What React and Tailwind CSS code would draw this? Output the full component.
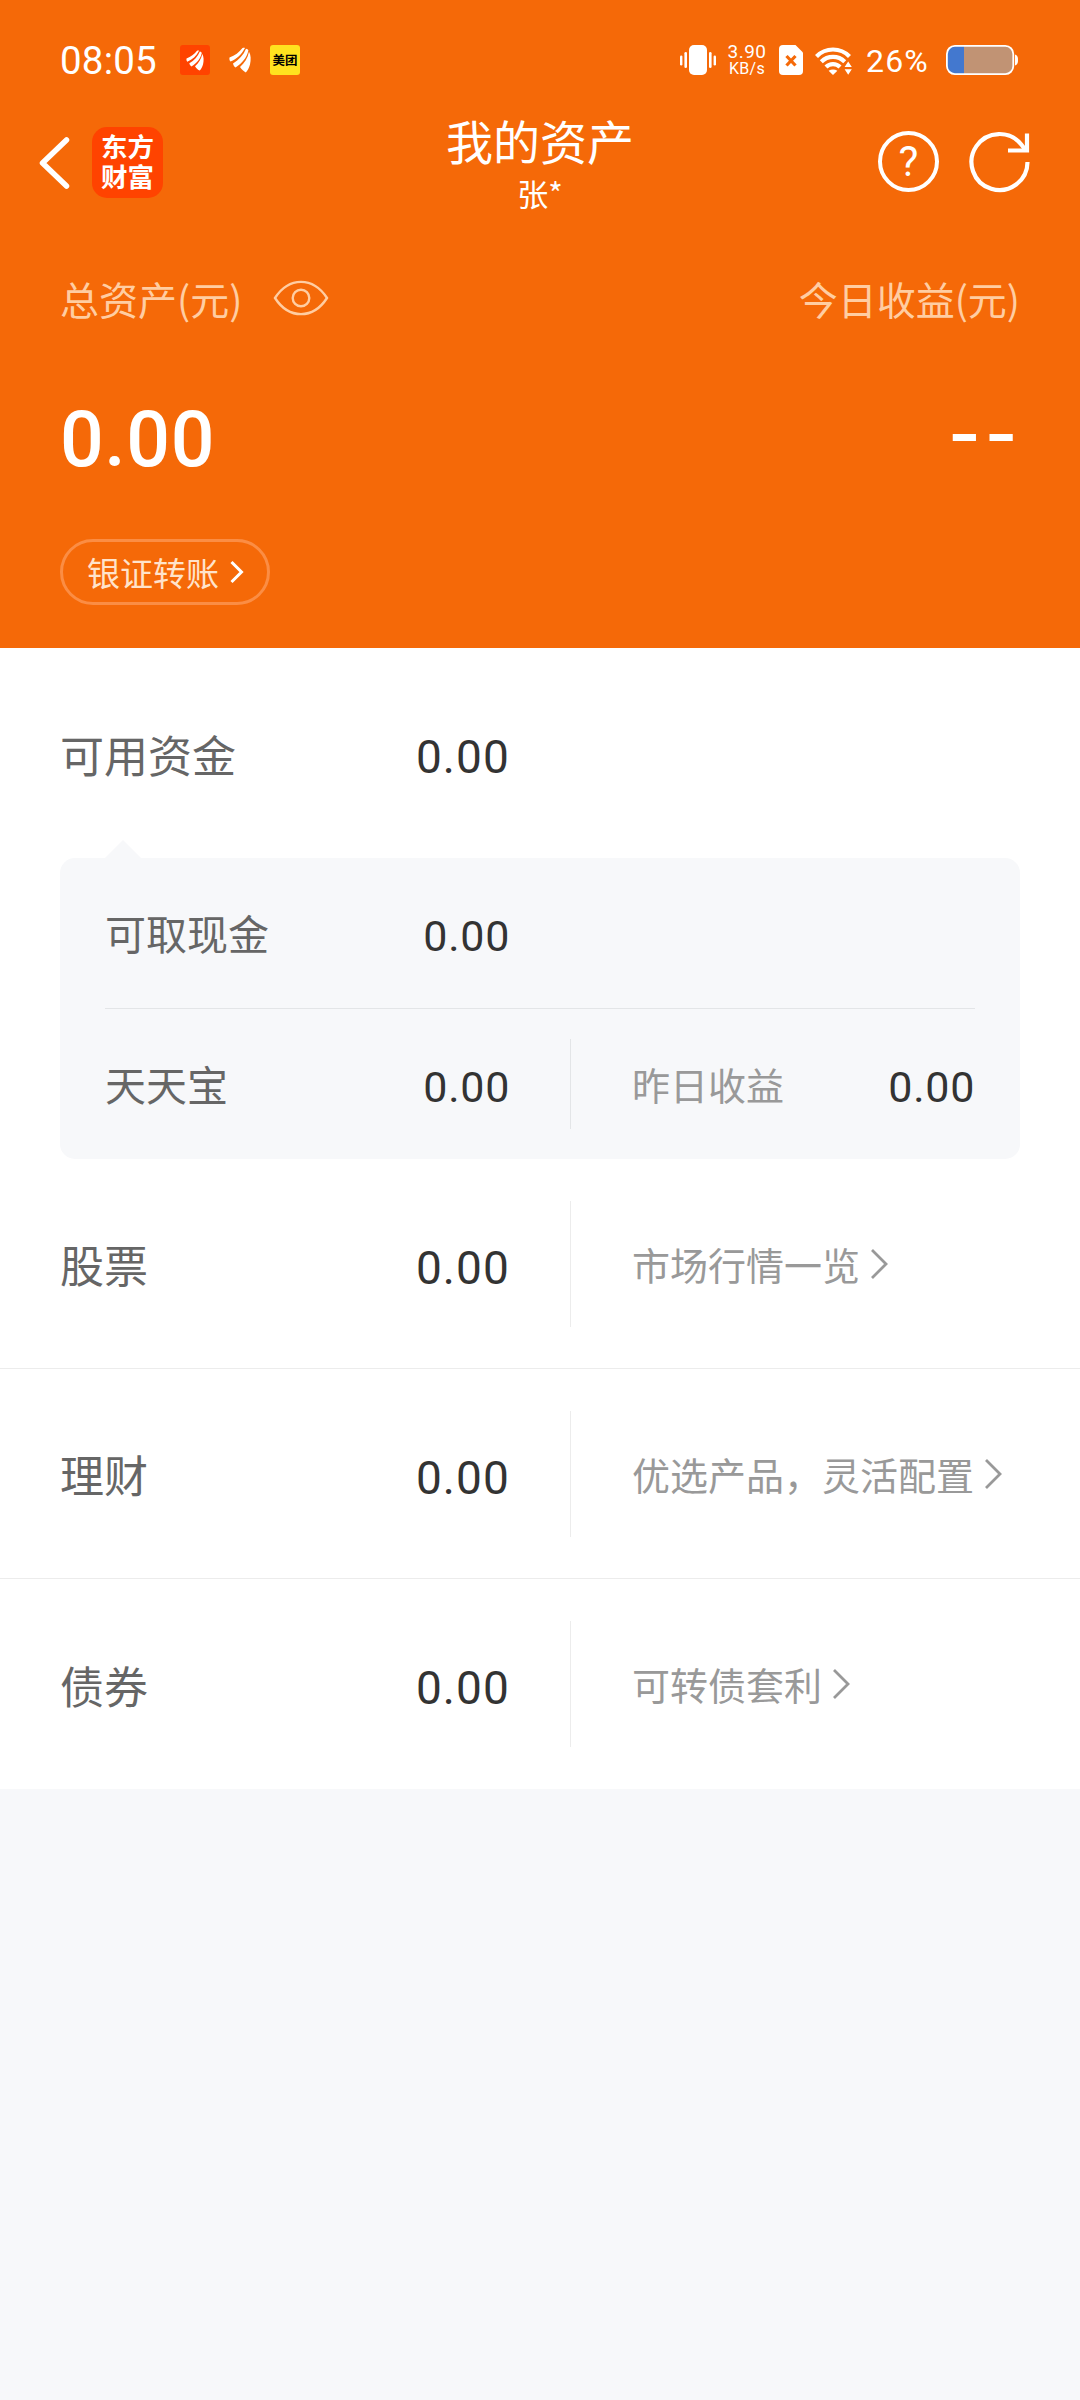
import React from 'react'

const CJK = "font-['Noto_Sans_CJK_SC',sans-serif]"
const NUM = "font-['Roboto','Noto_Sans_CJK_SC',sans-serif]"

const rows = [
  { name: '股票', amount: '0.00', link: '市场行情一览' },
  { name: '理财', amount: '0.00', link: '优选产品，灵活配置' },
  { name: '债券', amount: '0.00', link: '可转债套利' },
]

const Feather = ({ className }) => (
  <svg viewBox="0 0 22 26" className={className} fill="currentColor">
    <path d="M0.5 10.5C6 8.5 10 5.5 13.5 1C14.5 0.5 15.5 0.6 16 1C12.5 7.5 8 12 1.5 14.5C0.5 13.5 0.2 12 0.5 10.5Z" />
    <path d="M4 16.5C10 13 14.5 8 17 1.8C18.2 1.9 19 2.6 19.4 3.6C17.6 11 13.5 16 6.5 20.5C5.2 19.5 4.2 18 4 16.5Z" />
    <path d="M11 20C15.5 16 18.8 11 20 4.8C22 8 22 13 21 17.5C20 21 18.5 24 16.8 25.5C15 24.5 12.5 22.5 11 20Z" />
  </svg>
)

const StatusBar = () => (
  <div className={`flex h-[120px] items-center pl-[60px] pr-[61px] ${NUM}`}>
    <div className="w-[120px] pt-[1px] text-[38.5px] leading-[44px] tracking-[0.2px]">08:05</div>
    <div className="flex size-[30px] items-center justify-center rounded-[3px] bg-[#ff4300]">
      <Feather className="h-[21px] w-[18px]" />
    </div>
    <Feather className="ml-[19px] h-[26px] w-[22px]" />
    <div className={`ml-[19px] flex size-[30px] items-center justify-center rounded-[3px] bg-[#ffe21f] text-[12.5px] font-bold leading-none text-black ${CJK}`}>
      美团
    </div>

    <svg viewBox="0 0 36 30" className="ml-auto h-[30px] w-[36px]" fill="currentColor">
      <rect x="9" y="0" width="18" height="30" rx="5" />
      <rect x="0" y="10.5" width="2.4" height="10" rx="1.2" />
      <rect x="4.4" y="7" width="2.6" height="16" rx="1.3" />
      <rect x="29" y="7" width="2.6" height="16" rx="1.3" />
      <rect x="33.6" y="10.5" width="2.4" height="10" rx="1.2" />
    </svg>
    <div className="ml-[10px] flex w-[42px] flex-col items-center">
      <span className="text-[19px] leading-[16px] tracking-[0.5px]">3.90</span>
      <span className="text-[16px] leading-[17px] tracking-[0.3px]">KB/s</span>
    </div>
    <svg viewBox="0 0 24 30" className="ml-[11px] h-[30px] w-[24px]">
      <path d="M4 0H16.5L24 7.5V26A4 4 0 0 1 20 30H4A4 4 0 0 1 0 26V4A4 4 0 0 1 4 0Z" fill="white" />
      <path d="M7.5 11L16.5 20.5M16.5 11L7.5 20.5" stroke="#f56908" strokeWidth="3.2" />
    </svg>
    <svg viewBox="0 0 38 30" className="ml-[12px] h-[30px] w-[38px]" fill="none" stroke="white" strokeWidth="4.2">
      <path d="M1.5 11.5A23 23 0 0 1 34.5 11.5" />
      <path d="M6.3 16.8A16.5 16.5 0 0 1 29.7 16.8" />
      <path d="M11 22A9.8 9.8 0 0 1 25 22" />
      <path d="M13.6 25.8Q18 23.4 22.4 25.8L18 30Z" fill="white" stroke="none" />
      <path d="M29.6 22L33.2 16.5L36.8 22ZM29.6 24.3L33.2 29.8L36.8 24.3Z" fill="white" stroke="none" />
    </svg>
    <div className="ml-[13px] w-[80px] pt-[1px] text-[32px] leading-[36px] tracking-[1.2px]">26%</div>
    <svg viewBox="0 0 73 30" className="h-[30px] w-[73px]">
      <rect x="1" y="1" width="66" height="28" rx="8" fill="#c19374" />
      <path d="M18 1H9A8 8 0 0 0 1 9V21A8 8 0 0 0 9 29H18Z" fill="#4378cf" />
      <rect x="0.9" y="0.9" width="66.4" height="28.2" rx="8" fill="none" stroke="white" strokeWidth="1.8" />
      <path d="M69 9.5C71.5 10.5 72 12 72 15S71.5 19.5 69 20.5Z" fill="white" />
    </svg>
  </div>
)

const NavBar = () => (
  <div className={`grid h-[90px] grid-cols-3 ${CJK}`}>
    <div className="flex items-start pl-[38px] pt-[7px]">
      <svg viewBox="0 0 34 56" className="mt-[8px] h-[56px] w-[34px]" fill="none" stroke="white" strokeWidth="5.5" strokeLinecap="round" strokeLinejoin="round">
        <path d="M28.5 5L4.5 28L28.5 51" />
      </svg>
      <div className="ml-[20px] h-[71px] w-[71px] rounded-[15px] bg-[#ff4300] pt-[4px] text-center text-[26.5px] font-bold leading-[29.5px]">
        <div>东方</div>
        <div>财富</div>
      </div>
    </div>
    <div className="flex flex-col items-center">
      <h1 className="-mt-[3px] text-[47px] leading-[46px]">我的资产</h1>
      <p className="mt-[8px] text-[31px] leading-[44px]">张*</p>
    </div>
    <div className="flex items-start justify-end pr-[49px] pt-[11px]">
      <div className={`flex size-[61px] items-center justify-center rounded-full border-[4px] border-white pt-[1px] text-[42px] leading-none ${NUM}`}>?</div>
      <svg viewBox="0 0 62 62" className="ml-[30px] h-[62px] w-[62px]" fill="none" stroke="white" strokeWidth="4.2">
        <path d="M58.5 31A28 28 0 1 1 52.5 13.7L56.5 19" />
        <path d="M58 2.5V19.5H39" />
      </svg>
    </div>
  </div>
)

const Arrow = ({ className }) => (
  <svg viewBox="0 0 20 34" className={className} fill="none" stroke="currentColor" strokeWidth="2.8">
    <path d="M2 3L16 17L2 31" />
  </svg>
)

const Amount = ({ small, children }) => (
  <div className={small
    ? `pt-[5px] text-[43px] leading-[50px] tracking-[0.7px] text-[#333] ${NUM}`
    : `pt-[8px] text-[46px] leading-[50px] tracking-[1.1px] text-[#333] ${NUM}`}>
    {children}
  </div>
)

const App = () => {
  return (
    <div className={`min-h-[2400px] w-[1080px] bg-[#f7f8fa] ${CJK}`}>
      <header className="h-[648px] bg-[#f56908] text-white">
        <StatusBar />
        <NavBar />
        <div className="mt-[58px] flex h-[60px] items-center justify-between px-[60px] text-[39px] leading-[60px] text-[#ffcda2]">
          <div className="flex items-center">
            <span>总资产(元)</span>
            <svg viewBox="0 0 56 36" className="ml-[31px] h-[36px] w-[56px]" fill="none" stroke="currentColor" strokeWidth="2.4">
              <path d="M2 18C16 -3.5 40 -3.5 54 18C40 39.5 16 39.5 2 18Z" />
              <circle cx="28" cy="18" r="8.3" />
            </svg>
          </div>
          <span>今日收益(元)</span>
        </div>
        <div className="mt-[65px] flex h-[90px] items-center justify-between pl-[60px] pr-[58px]">
          <span className={`pt-[4px] text-[77px] font-medium leading-[90px] tracking-[0.6px] ${NUM}`}>0.00</span>
          <span className="pb-[14px] font-['DejaVu_Sans',sans-serif] text-[88px] leading-[90px] tracking-[5px]">--</span>
        </div>
        <button className="ml-[60px] mt-[56px] flex h-[66px] w-[210px] items-center rounded-full border-[3px] border-[#fb8d44] pl-[24px] text-[33px] leading-[60px] text-[#ffe3cb]">
          银证转账
          <svg viewBox="0 0 14 24" className="ml-[11px] h-[24px] w-[14px]" fill="none" stroke="white" strokeWidth="3">
            <path d="M1.5 2L11.5 12L1.5 22" />
          </svg>
        </button>
      </header>

      <main className="bg-white">
        <div className="flex h-[210px] items-center pl-[60px]">
          <span className="w-[250px] pt-[1px] text-[44px] leading-[60px] text-[#666]">可用资金</span>
          <div className="w-[200px] text-right"><Amount>0.00</Amount></div>
        </div>

        <div className="relative mx-[60px] h-[301px] rounded-[15px] bg-[#f7f8fa] px-[45px]">
          <svg viewBox="0 0 36 18" className="absolute -top-[18px] left-[44.5px] h-[18px] w-[36px]" fill="#f7f8fa">
            <path d="M0 18L18 0L36 18Z" />
          </svg>
          <div className="flex h-[151px] items-center border-b border-[#e3e5e7]">
            <span className="w-[205px] pb-[2px] text-[41px] leading-[60px] text-[#666]">可取现金</span>
            <div className="w-[200px] text-right"><Amount small>0.00</Amount></div>
          </div>
          <div className="flex h-[150px] items-center">
            <span className="w-[205px] pb-[2px] text-[41px] leading-[60px] text-[#666]">天天宝</span>
            <div className="w-[200px] text-right"><Amount small>0.00</Amount></div>
            <div className="ml-[60px] flex h-[90px] flex-1 items-center justify-between border-l border-[#e3e5e7] pl-[61px]">
              <span className="text-[38px] leading-[60px] text-[#999]">昨日收益</span>
              <Amount small>0.00</Amount>
            </div>
          </div>
        </div>

        {
          rows.map((row, index) => (
            <div key={index} className="flex h-[210px] items-center border-b border-[#ececec] pl-[60px] last:border-b-0">
              <span className="w-[250px] pt-[1px] text-[44px] leading-[60px] text-[#666]">{row.name}</span>
              <div className="w-[200px] text-right"><Amount>{row.amount}</Amount></div>
              <div className="ml-[60px] flex h-[126px] items-center border-l border-[#ececec] pl-[61px] text-[38px] leading-[60px] text-[#999]">
                {row.link}
                <Arrow className="ml-[10px] h-[34px] w-[20px]" />
              </div>
            </div>
          ))
        }
      </main>
    </div>
  )
}

export default App
